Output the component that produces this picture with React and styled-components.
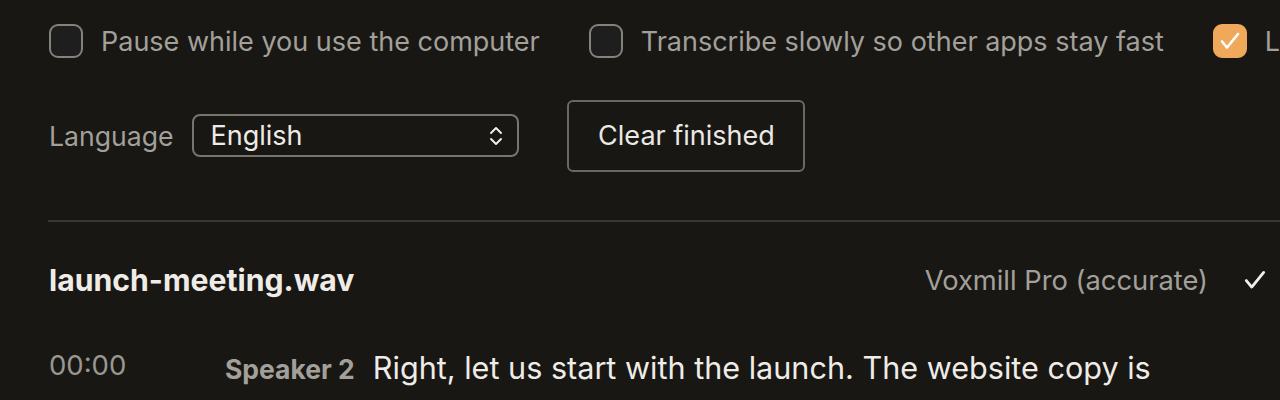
import React from "react"
import styled, { createGlobalStyle } from "styled-components"

const GlobalStyle = createGlobalStyle`
  html, body {
    margin: 0;
    padding: 0;
    background: #181714;
  }
  body {
    font-family: Inter, "Noto Sans", "Liberation Sans", sans-serif;
    color: #ebe8e3;
    -webkit-font-smoothing: antialiased;
  }
`

const Page = styled.main`
  width: 1280px;
  height: 400px;
  overflow: hidden;
  box-sizing: border-box;
  padding: 22px 12px 0 49px;
  background: #181714;
`

const OptionsRow = styled.div`
  display: flex;
  align-items: center;
  gap: 49px;
  white-space: nowrap;
  height: 38px;
`

const Option = styled.label`
  display: flex;
  align-items: center;
  gap: 18px;
  font-size: 27px;
  color: #a3a09a;
  flex-shrink: 0;
`

const Box = styled.span`
  width: 34px;
  height: 34px;
  border-radius: 9px;
  box-sizing: border-box;
  display: inline-flex;
  align-items: center;
  justify-content: center;
  border: 2px solid ${(p) => (p.checked ? "#f0a95a" : "#85817b")};
  background: ${(p) => (p.checked ? "#f0a95a" : "#1e1e1e")};
`

const ControlsRow = styled.div`
  display: flex;
  align-items: center;
  margin-top: 40px;
  height: 71px;
`

const FieldLabel = styled.span`
  font-size: 26.6px;
  color: #a3a09a;
  margin-right: 19px;
`

const Select = styled.div`
  width: 327px;
  height: 43px;
  box-sizing: border-box;
  border: 2px solid #78746e;
  border-radius: 8px;
  display: flex;
  align-items: center;
  justify-content: space-between;
  padding: 0 13px 0 16px;
  font-size: 27px;
  color: #eeebe6;
  margin-right: 48px;
`

const Button = styled.button`
  height: 72px;
  width: 238px;
  box-sizing: border-box;
  background: transparent;
  border: 2px solid #6b6862;
  border-radius: 6px;
  font-family: inherit;
  font-size: 27px;
  color: #ebe8e3;
`

const Divider = styled.hr`
  border: none;
  height: 2px;
  background: #393733;
  margin: 49px -12px 0 -1px;
`

const FileHeader = styled.div`
  display: flex;
  align-items: center;
  justify-content: space-between;
  margin-top: 39px;
  height: 38px;
`

const FileName = styled.h2`
  margin: 0;
  font-size: 30.2px;
  font-weight: 700;
  color: #efece7;
`

const Meta = styled.div`
  display: flex;
  align-items: center;
  gap: 34px;
  font-size: 27.3px;
  color: #a3a09a;
`

const Segment = styled.div`
  display: flex;
  align-items: flex-start;
  margin-top: 49px;
`

const Time = styled.span`
  width: 176px;
  flex-shrink: 0;
  font-size: 27.5px;
  line-height: 34px;
  color: #9a9791;
`

const Line = styled.p`
  margin: 0;
  line-height: 40px;
  white-space: nowrap;
`

const Speaker = styled.span`
  font-size: 26.5px;
  font-weight: 700;
  color: #a3a09a;
  margin-right: 18px;
`

const Words = styled.span`
  font-size: 30.6px;
  color: #efece7;
`

const Check = ({ color = "#fff", size = 22 }) => (
  <svg width={size} height={size} viewBox="0 0 24 24" fill="none">
    <path d="M4 12.5l5 6L20 5" stroke={color} strokeWidth="2.6" strokeLinecap="round" strokeLinejoin="round" />
  </svg>
)

const Chevrons = () => (
  <svg width="16" height="22" viewBox="0 0 16 22" fill="none">
    <path d="M3 8l5-5 5 5M3 14l5 5 5-5" stroke="#eeebe6" strokeWidth="2" strokeLinecap="round" strokeLinejoin="round" />
  </svg>
)

const options = [
  { label: "Pause while you use the computer", checked: false },
  { label: "Transcribe slowly so other apps stay fast", checked: false },
  { label: "Label speakers automatically", checked: true },
]

const App = () => {
  return (
    <Page>
      <GlobalStyle />
      <OptionsRow>
        {options.map((o) => (
          <Option key={o.label}>
            <Box checked={o.checked}>{o.checked && <Check size={24} />}</Box>
            {o.label}
          </Option>
        ))}
      </OptionsRow>
      <ControlsRow>
        <FieldLabel>Language</FieldLabel>
        <Select>
          English
          <Chevrons />
        </Select>
        <Button>Clear finished</Button>
      </ControlsRow>
      <Divider />
      <FileHeader>
        <FileName>launch-meeting.wav</FileName>
        <Meta>
          Voxmill Pro (accurate)
          <Check color="#f2efea" size={26} />
        </Meta>
      </FileHeader>
      <Segment>
        <Time>00:00</Time>
        <Line>
          <Speaker>Speaker 2</Speaker>
          <Words>Right, let us start with the launch. The website copy is</Words>
        </Line>
      </Segment>
    </Page>
  )
}

export default App
